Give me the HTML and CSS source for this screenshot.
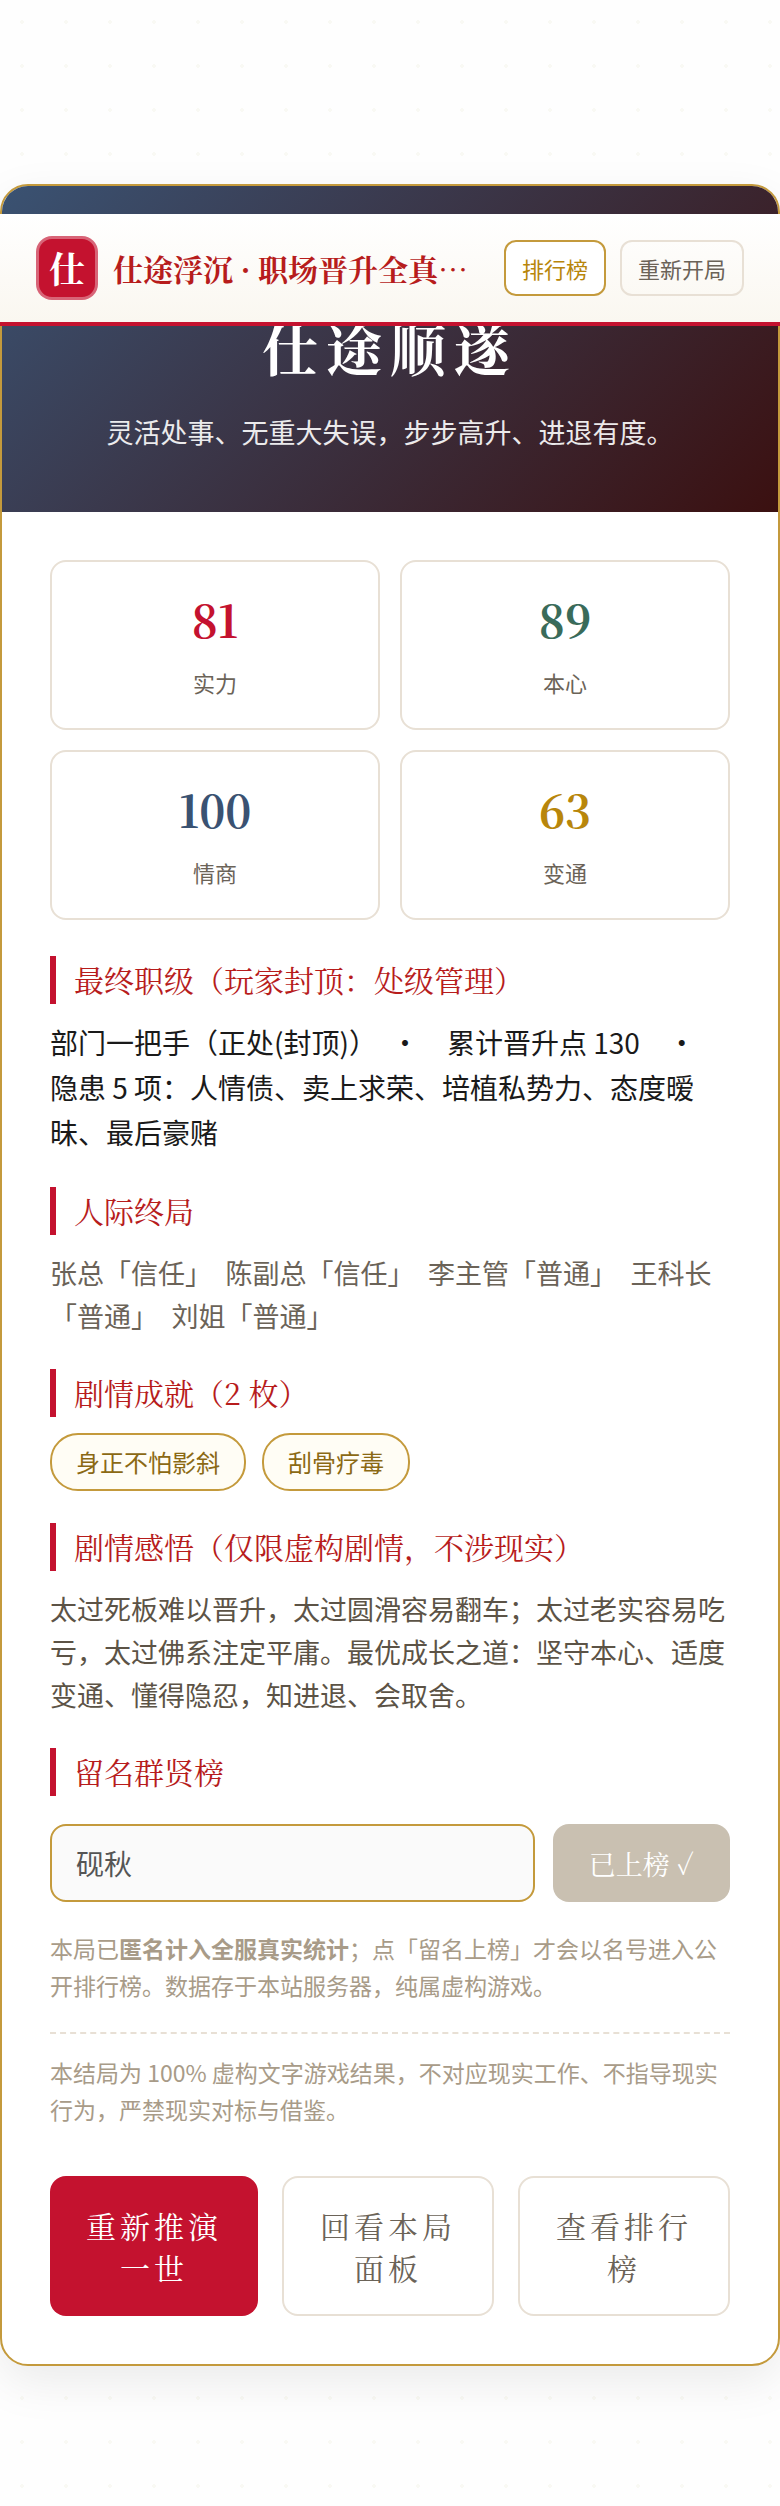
FILE: index.html
```html
<!DOCTYPE html>
<html lang="zh-CN">
<head>
    <meta charset="UTF-8">
    <meta name="viewport" content="width=device-width, initial-scale=1.0">
    <title>仕途浮沉 · 职场晋升全真模拟</title>
    <link rel="stylesheet" href="styles.css">
</head>
<body>

    <header class="topbar">
        <div class="logo">仕</div>
        <h1 class="brand">仕途浮沉 · 职场晋升全真模拟</h1>
        <nav class="topbar-actions">
            <button type="button" class="btn-small gold">排行榜</button>
            <button type="button" class="btn-small">重新开局</button>
        </nav>
    </header>

    <main class="ending-card">
        <div class="hero">
            <h2>仕途顺遂</h2>
            <p>灵活处事、无重大失误，步步高升、进退有度。</p>
        </div>

        <div class="ending-body">
            <div class="stats">
                <div class="stat">
                    <div class="num red">81</div>
                    <div class="label">实力</div>
                </div>
                <div class="stat">
                    <div class="num green">89</div>
                    <div class="label">本心</div>
                </div>
                <div class="stat">
                    <div class="num blue">100</div>
                    <div class="label">情商</div>
                </div>
                <div class="stat">
                    <div class="num gold">63</div>
                    <div class="label">变通</div>
                </div>
            </div>

            <h3>最终职级（玩家封顶：处级管理）</h3>
            <p class="rank">部门一把手（正处(封顶)）　·　累计晋升点 130　·　隐患 5 项：人情债、卖上求荣、培植私势力、态度暧昧、最后豪赌</p>

            <h3>人际终局</h3>
            <p class="relations">张总「信任」　陈副总「信任」　李主管「普通」　王科长「普通」　刘姐「普通」</p>

            <h3>剧情成就（2 枚）</h3>
            <div class="badges">
                <span class="badge">身正不怕影斜</span>
                <span class="badge">刮骨疗毒</span>
            </div>

            <h3>剧情感悟（仅限虚构剧情，不涉现实）</h3>
            <p class="insight">太过死板难以晋升，太过圆滑容易翻车；太过老实容易吃亏，太过佛系注定平庸。最优成长之道：坚守本心、适度变通、懂得隐忍，知进退、会取舍。</p>

            <h3><label for="player-name">留名群贤榜</label></h3>
            <form class="sign-form">
                <input type="text" id="player-name" value="砚秋" disabled>
                <button type="button" disabled>已上榜 ✓</button>
            </form>
            <p class="note">本局已<b>匿名计入全服真实统计</b>；点「留名上榜」才会以名号进入公开排行榜。数据存于本站服务器，纯属虚构游戏。</p>

            <p class="note disclaimer">本结局为 100% 虚构文字游戏结果，不对应现实工作、不指导现实行为，严禁现实对标与借鉴。</p>

            <div class="actions">
                <button type="button" class="primary">重新推演一世</button>
                <button type="button">回看本局面板</button>
                <button type="button">查看排行榜</button>
            </div>
        </div>
    </main>

</body>
</html>
```

FILE: styles.css
```css
* {
    box-sizing: border-box;
}

body {
    position: relative;
    margin: 0;
    padding: 184px 0 140px;
    font-family: "Noto Sans CJK SC", sans-serif;
    color: #1a1a1a;
    background-color: #fefefe;
    background-image: radial-gradient(circle, #f9f9f4 2px, transparent 2px);
    background-size: 44px 44px;
}

h1, h2, h3, p {
    margin: 0;
}

button, input {
    font-family: inherit;
    margin: 0;
}

.logo, .brand, .hero h2, h3, .num, .sign-form button, .actions button {
    font-family: "Noto Serif CJK SC", "Noto Serif SC", serif;
}

/* 顶栏，浮在结局卡片之上 */
.topbar {
    position: absolute;
    top: 214px;
    left: 0;
    right: 0;
    z-index: 10;
    display: flex;
    align-items: center;
    padding: 22px 36px;
    background: linear-gradient(180deg, #ffffff, #faf7f0);
    border-bottom: 4px solid #c4122f;
}

.logo {
    flex: none;
    width: 62px;
    height: 64px;
    margin-right: 15px;
    border: 3px solid rgba(255, 255, 255, 0.35);
    border-radius: 16px;
    background: #c4122f;
    color: #fff;
    font-size: 36px;
    font-weight: bold;
    line-height: 58px;
    text-align: center;
}

.brand {
    flex: 1;
    min-width: 0;
    margin-right: 20px;
    color: #b71c1c;
    font-size: 30px;
    line-height: 46px;
    white-space: nowrap;
    overflow: hidden;
    text-overflow: ellipsis;
}

.topbar-actions {
    display: flex;
    flex: none;
    gap: 14px;
}

.btn-small {
    height: 56px;
    padding: 0 16px;
    border: 2px solid #e8e0d5;
    border-radius: 12px;
    background: transparent;
    color: #6b6358;
    font-size: 22px;
}

.btn-small.gold {
    border-color: #c49a3c;
    background: #fff;
    color: #b8860b;
}

/* 结局卡片 */
.ending-card {
    border: 2px solid #c49a3c;
    border-radius: 28px;
    background: #fff;
    overflow: hidden;
    box-shadow: 0 16px 48px rgba(0, 0, 0, 0.08);
}

.hero {
    padding: 116px 48px 58px;
    background: linear-gradient(135deg, #3a5272, #3b1010);
    color: #fff;
    text-align: center;
}

.hero h2 {
    margin-bottom: 18px;
    font-size: 56px;
    line-height: 90px;
    letter-spacing: 8px;
}

.hero p {
    font-size: 27px;
    line-height: 44px;
    opacity: 0.9;
}

.ending-body {
    padding: 48px;
}

.stats {
    display: grid;
    grid-template-columns: 1fr 1fr;
    gap: 20px;
    margin-bottom: 36px;
}

.stat {
    padding: 22px 16px 28px;
    border: 2px solid #e8e0d5;
    border-radius: 16px;
    text-align: center;
}

.num {
    font-size: 44px;
    font-weight: bold;
    line-height: 70px;
    margin-bottom: 11px;
}

.num.red { color: #c4122f; }
.num.green { color: #3a6b5a; }
.num.blue { color: #3a5272; }
.num.gold { color: #b8860b; }

.label {
    color: #6b6358;
    font-size: 22px;
    line-height: 35px;
}

h3 {
    margin: 32px 0 16px;
    padding: 0 0 2px 18px;
    border-left: 6px solid #c4122f;
    color: #b71c1c;
    font-size: 30px;
    font-weight: normal;
    line-height: 46px;
}

.rank {
    font-size: 28px;
    line-height: 45px;
}

.relations {
    color: #6b6358;
    font-size: 27px;
    line-height: 43px;
}

.insight {
    color: #5c5346;
    font-size: 27px;
    line-height: 43px;
}

.badges {
    display: flex;
    flex-wrap: wrap;
    gap: 16px;
}

.badge {
    padding: 8px 24px;
    border: 2px solid #c49a3c;
    border-radius: 28px;
    background: #fffdf5;
    color: #8b6914;
    font-size: 24px;
    line-height: 38px;
}

.sign-form {
    display: flex;
    gap: 18px;
    margin: 28px 0;
}

.sign-form input {
    flex: 1;
    min-width: 0;
    height: 78px;
    padding: 0 24px;
    border: 2px solid #c49a3c;
    border-radius: 16px;
    background: #fafafa;
    color: #555;
    font-size: 28px;
}

.sign-form button {
    padding: 0 36px;
    border: none;
    border-radius: 16px;
    background: #c9c0b1;
    color: #fff;
    font-size: 27px;
}

.note {
    color: #a89b88;
    font-size: 23px;
    line-height: 37px;
}

.disclaimer {
    margin-top: 28px;
    padding-top: 20px;
    border-top: 2px dashed #e8e0d5;
}

.actions {
    display: flex;
    gap: 24px;
    margin-top: 48px;
}

.actions button {
    flex: 1;
    padding: 26px 36px;
    border: 2px solid #e8e0d5;
    border-radius: 16px;
    background: #fff;
    color: #6b6358;
    font-size: 30px;
    line-height: 42px;
    letter-spacing: 4px;
}

.actions .primary {
    border: none;
    background: #c4122f;
    color: #fff;
}
```
